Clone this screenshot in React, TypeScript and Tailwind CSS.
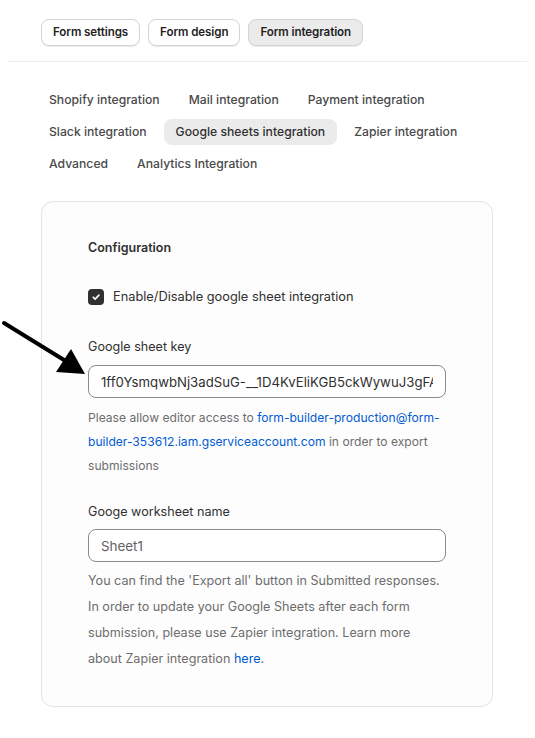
import React from 'react';

const topTabs = ['Form settings', 'Form design', 'Form integration'];
const subTabs = [
  'Shopify integration',
  'Mail integration',
  'Payment integration',
  'Slack integration',
  'Google sheets integration',
  'Zapier integration',
  'Advanced',
  'Analytics Integration',
];

export default function App() {
  const [active, setActive] = React.useState('Google sheets integration');
  const [enabled, setEnabled] = React.useState(true);

  return (
    <div className="relative min-h-[738px] bg-white font-['Inter',sans-serif] text-[#303030]">
      {/* top buttons */}
      <div className="flex gap-2 pl-[41px] pt-[19px]">
        {topTabs.map((t) => (
          <button
            key={t}
            className={`h-[27px] rounded-lg border border-[#d4d4d4] px-[11px] text-[11.6px] font-semibold tracking-[-0.1px] text-[#1f1f1f] shadow-[0_1px_0_rgba(0,0,0,0.08)] ${
              t === 'Form integration' ? 'bg-[#ebebeb]' : 'bg-white'
            }`}
          >
            {t}
          </button>
        ))}
      </div>
      <div className="mx-[8px] mt-[15px] border-t border-[#ececec]" />

      {/* sub tabs */}
      <div className="flex w-[482px] flex-wrap gap-x-[5px] gap-y-[6px] pl-[37px] pt-[25px]">
        {subTabs.map((t) => (
          <button
            key={t}
            onClick={() => setActive(t)}
            className={`h-[26px] rounded-lg px-3 text-[12.2px] font-medium text-[#4a4a4a] ${
              active === t ? 'bg-[#ebebeb] text-[#303030]' : ''
            }`}
          >
            {t}
          </button>
        ))}
      </div>

      {/* card */}
      <div className="ml-[41px] mt-[24px] w-[452px] rounded-xl border border-[#e3e3e3] bg-[#fdfdfd] px-[46px] pb-[34px] pt-[36px]">
        <h2 className="text-[12.5px] font-semibold leading-5 text-[#303030]">Configuration</h2>

        <label className="mt-[29px] flex items-center gap-[9px] text-[12.8px] leading-5">
          <span
            onClick={() => setEnabled(!enabled)}
            className={`flex h-4 w-4 items-center justify-center rounded-[4px] ${
              enabled ? 'bg-[#303030]' : 'border border-[#8a8a8a] bg-white'
            }`}
          >
            {enabled && (
              <svg width="10" height="10" viewBox="0 0 10 10" fill="none">
                <path d="M2.2 5.2l1.9 1.9 3.8-4" stroke="white" strokeWidth="1.6" strokeLinecap="round" strokeLinejoin="round" />
              </svg>
            )}
          </span>
          Enable/Disable google sheet integration
        </label>

        <div className="mt-[30px] text-[12.6px] leading-5">Google sheet key</div>
        <input
          defaultValue="1ff0YsmqwbNj3adSuG-__1D4KvEliKGB5ckWywuJ3gFA"
          className="mt-[8px] h-[33px] w-full rounded-lg border border-[#8a8a8a] bg-white px-3 text-[13.2px] text-[#303030] outline-none"
        />
        <p className="mt-[8px] text-[12.1px] leading-6 text-[#6d6d6d]">
          Please allow editor access to{' '}
          <a className="text-[#005bd3]">form-builder-production@form-builder-353612.iam.gserviceaccount.com</a> in order to
          export submissions
        </p>

        <div className="mt-[24px] text-[12.6px] leading-5">Googe worksheet name</div>
        <input
          defaultValue="Sheet1"
          className="mt-[7px] h-[33px] w-full rounded-lg border border-[#8a8a8a] bg-white px-3 text-[13.4px] text-[#616161] outline-none"
        />
        <p className="mt-[6px] text-[12.6px] leading-[26px] text-[#6d6d6d]">
          You can find the 'Export all' button in Submitted responses. In order to update your Google Sheets after each form
          submission, please use Zapier integration. Learn more about Zapier integration{' '}
          <a className="text-[#005bd3]">here</a>.
        </p>
      </div>

      {/* pointer arrow */}
      <svg className="absolute left-0 top-[318px]" width="95" height="65" viewBox="0 0 95 65">
        <line x1="4" y1="5" x2="64" y2="42" stroke="black" strokeWidth="4" strokeLinecap="round" />
        <polygon points="85,56 56,54 71,31" fill="black" />
      </svg>
    </div>
  );
}
